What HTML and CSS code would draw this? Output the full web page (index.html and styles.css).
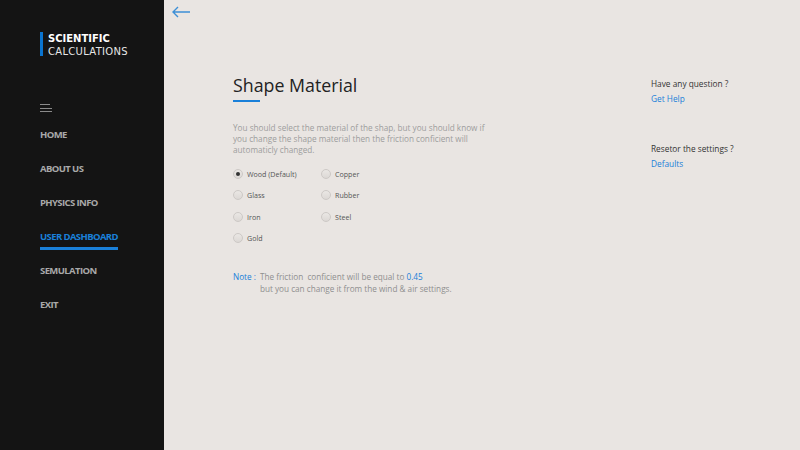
FILE: index.html
```html
<!DOCTYPE html>
<html>
<head>
<meta charset="utf-8">
<link rel="stylesheet" href="styles.css">
</head>
<body>
<div class="app">
  <aside class="sidebar">
    <div class="logo">
      <div class="logo-bar"></div>
      <div class="logo-text">
        <div class="logo-top">SCIENTIFIC</div>
        <div class="logo-bottom">CALCULATIONS</div>
      </div>
    </div>
    <div class="burger"><span></span><span></span><span></span></div>
    <nav class="nav">
      <a class="nav-item">HOME</a>
      <a class="nav-item">ABOUT US</a>
      <a class="nav-item">PHYSICS INFO</a>
      <a class="nav-item active">USER DASHBOARD</a>
      <a class="nav-item">SEMULATION</a>
      <a class="nav-item">EXIT</a>
    </nav>
  </aside>
  <main class="main">
    <div class="back">
      <svg width="20" height="12" viewBox="0 0 20 12"><path d="M19 6H2M7 1L2 6l5 5" fill="none" stroke="#3d8fd6" stroke-width="1.4"/></svg>
    </div>
    <div class="content">
      <section class="panel">
        <h1 class="title">Shape Material</h1>
        <div class="title-line"></div>
        <p class="desc">You should select the material of the shap, but you should know if you change the shape material then the friction conficient will automaticly changed.</p>
        <div class="radios">
          <label class="radio"><span class="dot checked"></span>Wood (Default)</label>
          <label class="radio"><span class="dot"></span>Copper</label>
          <label class="radio"><span class="dot"></span>Glass</label>
          <label class="radio"><span class="dot"></span>Rubber</label>
          <label class="radio"><span class="dot"></span>Iron</label>
          <label class="radio"><span class="dot"></span>Steel</label>
          <label class="radio"><span class="dot"></span>Gold</label>
        </div>
        <div class="note">
          <span class="note-label">Note :</span>
          <div class="note-text">The friction&nbsp; conficient will be equal to <span class="blue">0.45</span><br>but you can change it from the wind &amp; air settings.</div>
        </div>
      </section>
      <section class="help">
        <div class="help-block">
          <div class="help-q">Have any question ?</div>
          <a class="help-link">Get Help</a>
        </div>
        <div class="help-block">
          <div class="help-q">Resetor the settings ?</div>
          <a class="help-link">Defaults</a>
        </div>
      </section>
    </div>
  </main>
</div>
</body>
</html>
```
FILE: styles.css
```css
* { box-sizing: border-box; }
html, body { margin: 0; padding: 0; }
body {
  width: 800px;
  height: 450px;
  overflow: hidden;
  font-family: "Open Sans", "Noto Sans", sans-serif;
  background: #e9e5e2;
}
.app { display: flex; height: 450px; }
.sidebar {
  width: 164px;
  flex: 0 0 164px;
  background: #141414;
  padding: 32px 0 0 40px;
}
.logo { display: flex; gap: 5px; }
.logo-bar { width: 3px; height: 24px; background: #0a74d0; margin-top: 0; }
.logo-text { font-family: "DejaVu Sans", sans-serif; font-size: 10px; line-height: 13px; }
.logo-top { color: #fff; font-weight: bold; }
.logo-bottom { color: #e6e6e6; letter-spacing: 0.3px; }
.burger {
  margin-top: 46px;
  width: 12px;
  display: flex;
  flex-direction: column;
  gap: 2.5px;
}
.burger span { display: block; height: 1px; background: #8a8a8a; }
.burger span:nth-child(1) { width: 10px; }
.nav { display: flex; flex-direction: column; margin-top: 16px; }
.nav-item {
  font-size: 9.5px;
  font-weight: 700;
  color: #a9a9a9;
  height: 34px;
  line-height: 14px;
  align-self: flex-start;
  letter-spacing: -0.6px;
}
.nav-item.active { color: #1a80d9; }
.nav-item.active::after {
  content: "";
  display: block;
  height: 3px;
  margin-top: 3px;
  background: #1a80d9;
}
.main { flex: 1; position: relative; }
.back { position: absolute; left: 7px; top: 6px; }
.back svg { display: block; }
.content { display: flex; padding: 73px 0 0 69px; }
.panel { width: 418px; }
.title {
  margin: 0;
  font-size: 17.8px;
  font-weight: 400;
  color: #222;
  line-height: 24px;
}
.title-line { width: 27px; height: 2px; background: #1a80d9; margin-top: 3px; }
.desc {
  margin: 20px 0 0;
  font-size: 8.2px;
  line-height: 11px;
  color: #9d9d9d;
  width: 262px;
}
.radios {
  display: grid;
  grid-template-columns: 88px 100px;
  row-gap: 9.4px;
  margin-top: 13px;
}
.radio {
  display: flex;
  align-items: center;
  font-size: 7.1px;
  color: #555;
  height: 12px;
}
.dot {
  width: 10px;
  height: 10px;
  border-radius: 50%;
  background: linear-gradient(#eae7e4, #dcd8d5);
  border: 1px solid #cdc9c6;
  position: relative;
  margin-right: 4px;
  flex: 0 0 10px;
}
.dot.checked::after {
  content: "";
  position: absolute;
  left: 2px;
  top: 2px;
  width: 4px;
  height: 4px;
  border-radius: 50%;
  background: #333;
}
.note {
  display: flex;
  gap: 4px;
  margin-top: 27px;
  font-size: 8.2px;
  line-height: 12px;
}
.note-label { color: #1a80d9; }
.note-text { color: #8f8f8f; }
.blue { color: #1a80d9; }
.help { padding-top: 5px; }
.help-block { margin-bottom: 38px; }
.help-q { font-size: 8.3px; color: #333; line-height: 12px; }
.help-link { display: block; margin-top: 3px; font-size: 8.3px; color: #1a80d9; line-height: 12px; }
```
